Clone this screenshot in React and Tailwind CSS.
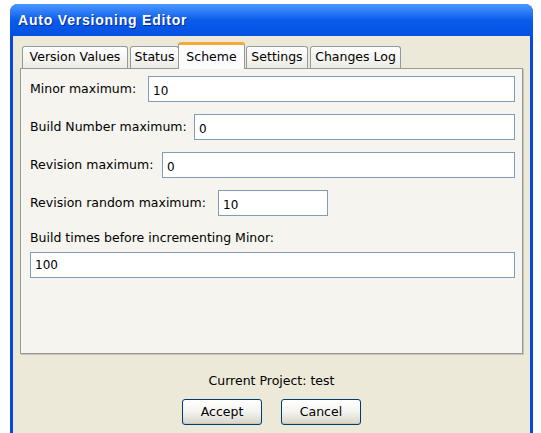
import { useState } from "react";

const tabs = [
  { name: "Version Values", w: "w-[106px]" },
  { name: "Status", w: "w-[49px]" },
  { name: "Scheme", w: "w-[67px]" },
  { name: "Settings", w: "w-[62px]" },
  { name: "Changes Log", w: "w-[91px]" },
];

function Row({ label, labelW, value, inputW }) {
  return (
    <div className="flex items-center h-[26px] mb-[12px]">
      <span className={`${labelW} shrink-0 text-[12.5px] text-black whitespace-nowrap`}>{label}</span>
      <input
        defaultValue={value}
        className={`${inputW} h-[26px] border border-[#7f9db9] bg-white px-[4px] pt-[3px] text-[12px] text-black outline-none`}
      />
    </div>
  );
}

function XpButton({ children }) {
  return (
    <button className="w-[80px] h-[26px] rounded-[3px] border border-[#003c74] bg-linear-to-b from-[#ffffff] via-[#f3f3ef] to-[#d8d4c8] text-[12.5px] text-black shadow-[inset_0_-1px_0_#c9c5b8]">
      {children}
    </button>
  );
}

export default function App() {
  const [active, setActive] = useState("Scheme");

  return (
    <div className="w-[541px] h-[433px] bg-white overflow-hidden" style={{ fontFamily: '"DejaVu Sans", Verdana, sans-serif' }}>
      <div className="ml-[10px] mt-[4px] w-[523px] h-[429px] flex flex-col rounded-t-[8px] bg-[#0a48e0]">
        {/* title bar */}
        <div className="h-[32px] shrink-0 flex items-center pl-[8px] rounded-t-[8px] bg-linear-to-b from-[#4a98ff] via-[#0a5ceb] to-[#0550e2]">
          <span
            className="text-white font-bold text-[14px] tracking-[0.8px] [text-shadow:1px_1px_0_#0a2a90]"
            style={{ fontFamily: '"Liberation Sans", Arial, sans-serif' }}
          >
            Auto Versioning Editor
          </span>
        </div>

        {/* body */}
        <div className="flex-1 mx-[3px] bg-[#ece9d8] flex flex-col pl-[7px] pr-[7px] pt-[6px]">
          {/* tab strip */}
          <div className="flex items-end h-[26px] pl-[2px] relative z-10">
            {tabs.map((t, i) => {
              const sel = t.name === active;
              return (
                <div
                  key={t.name}
                  onClick={() => setActive(t.name)}
                  className={
                    sel
                      ? `${t.w} h-[27px] -mb-[1px] -mx-[1px] flex items-center justify-center rounded-t-[3px] border border-b-0 border-[#919b9c] border-t-[3px] border-t-[#f6a83a] bg-[#fcfcfe] text-[12.5px] text-black`
                      : `${t.w} h-[22px] ${i > 0 ? "ml-[2px]" : ""} flex items-center justify-center rounded-t-[3px] border border-b-0 border-[#919b9c] bg-linear-to-b from-[#ffffff] to-[#ecebe5] text-[12.5px] text-black`
                  }
                >
                  {t.name}
                </div>
              );
            })}
          </div>

          {/* tab panel */}
          <div className="w-[503px] h-[286px] border border-[#919b9c] bg-[#f5f4ef] shadow-[1px_1px_0_#c8c5b6] flex flex-col pt-[7px] pl-[9px] pr-[7px]">
            <Row label="Minor maximum:" labelW="w-[118px]" value="10" inputW="flex-1" />
            <Row label="Build Number maximum:" labelW="w-[164px]" value="0" inputW="flex-1" />
            <Row label="Revision maximum:" labelW="w-[132px]" value="0" inputW="flex-1" />
            <Row label="Revision random maximum:" labelW="w-[188px]" value="10" inputW="w-[110px]" />
            <div className="h-[20px] flex items-center text-[12.5px] text-black">Build times before incrementing Minor:</div>
            <input
              defaultValue="100"
              className="mt-[4px] h-[26px] border border-[#7f9db9] bg-white px-[4px] text-[12px] text-black outline-none"
            />
          </div>

          <div className="mt-[20px] h-[14px] flex items-center justify-center text-[12.5px] text-black">
            Current Project: test
          </div>

          <div className="mt-[11px] flex justify-center gap-[19px]">
            <XpButton>Accept</XpButton>
            <XpButton>Cancel</XpButton>
          </div>
        </div>
      </div>
    </div>
  );
}
